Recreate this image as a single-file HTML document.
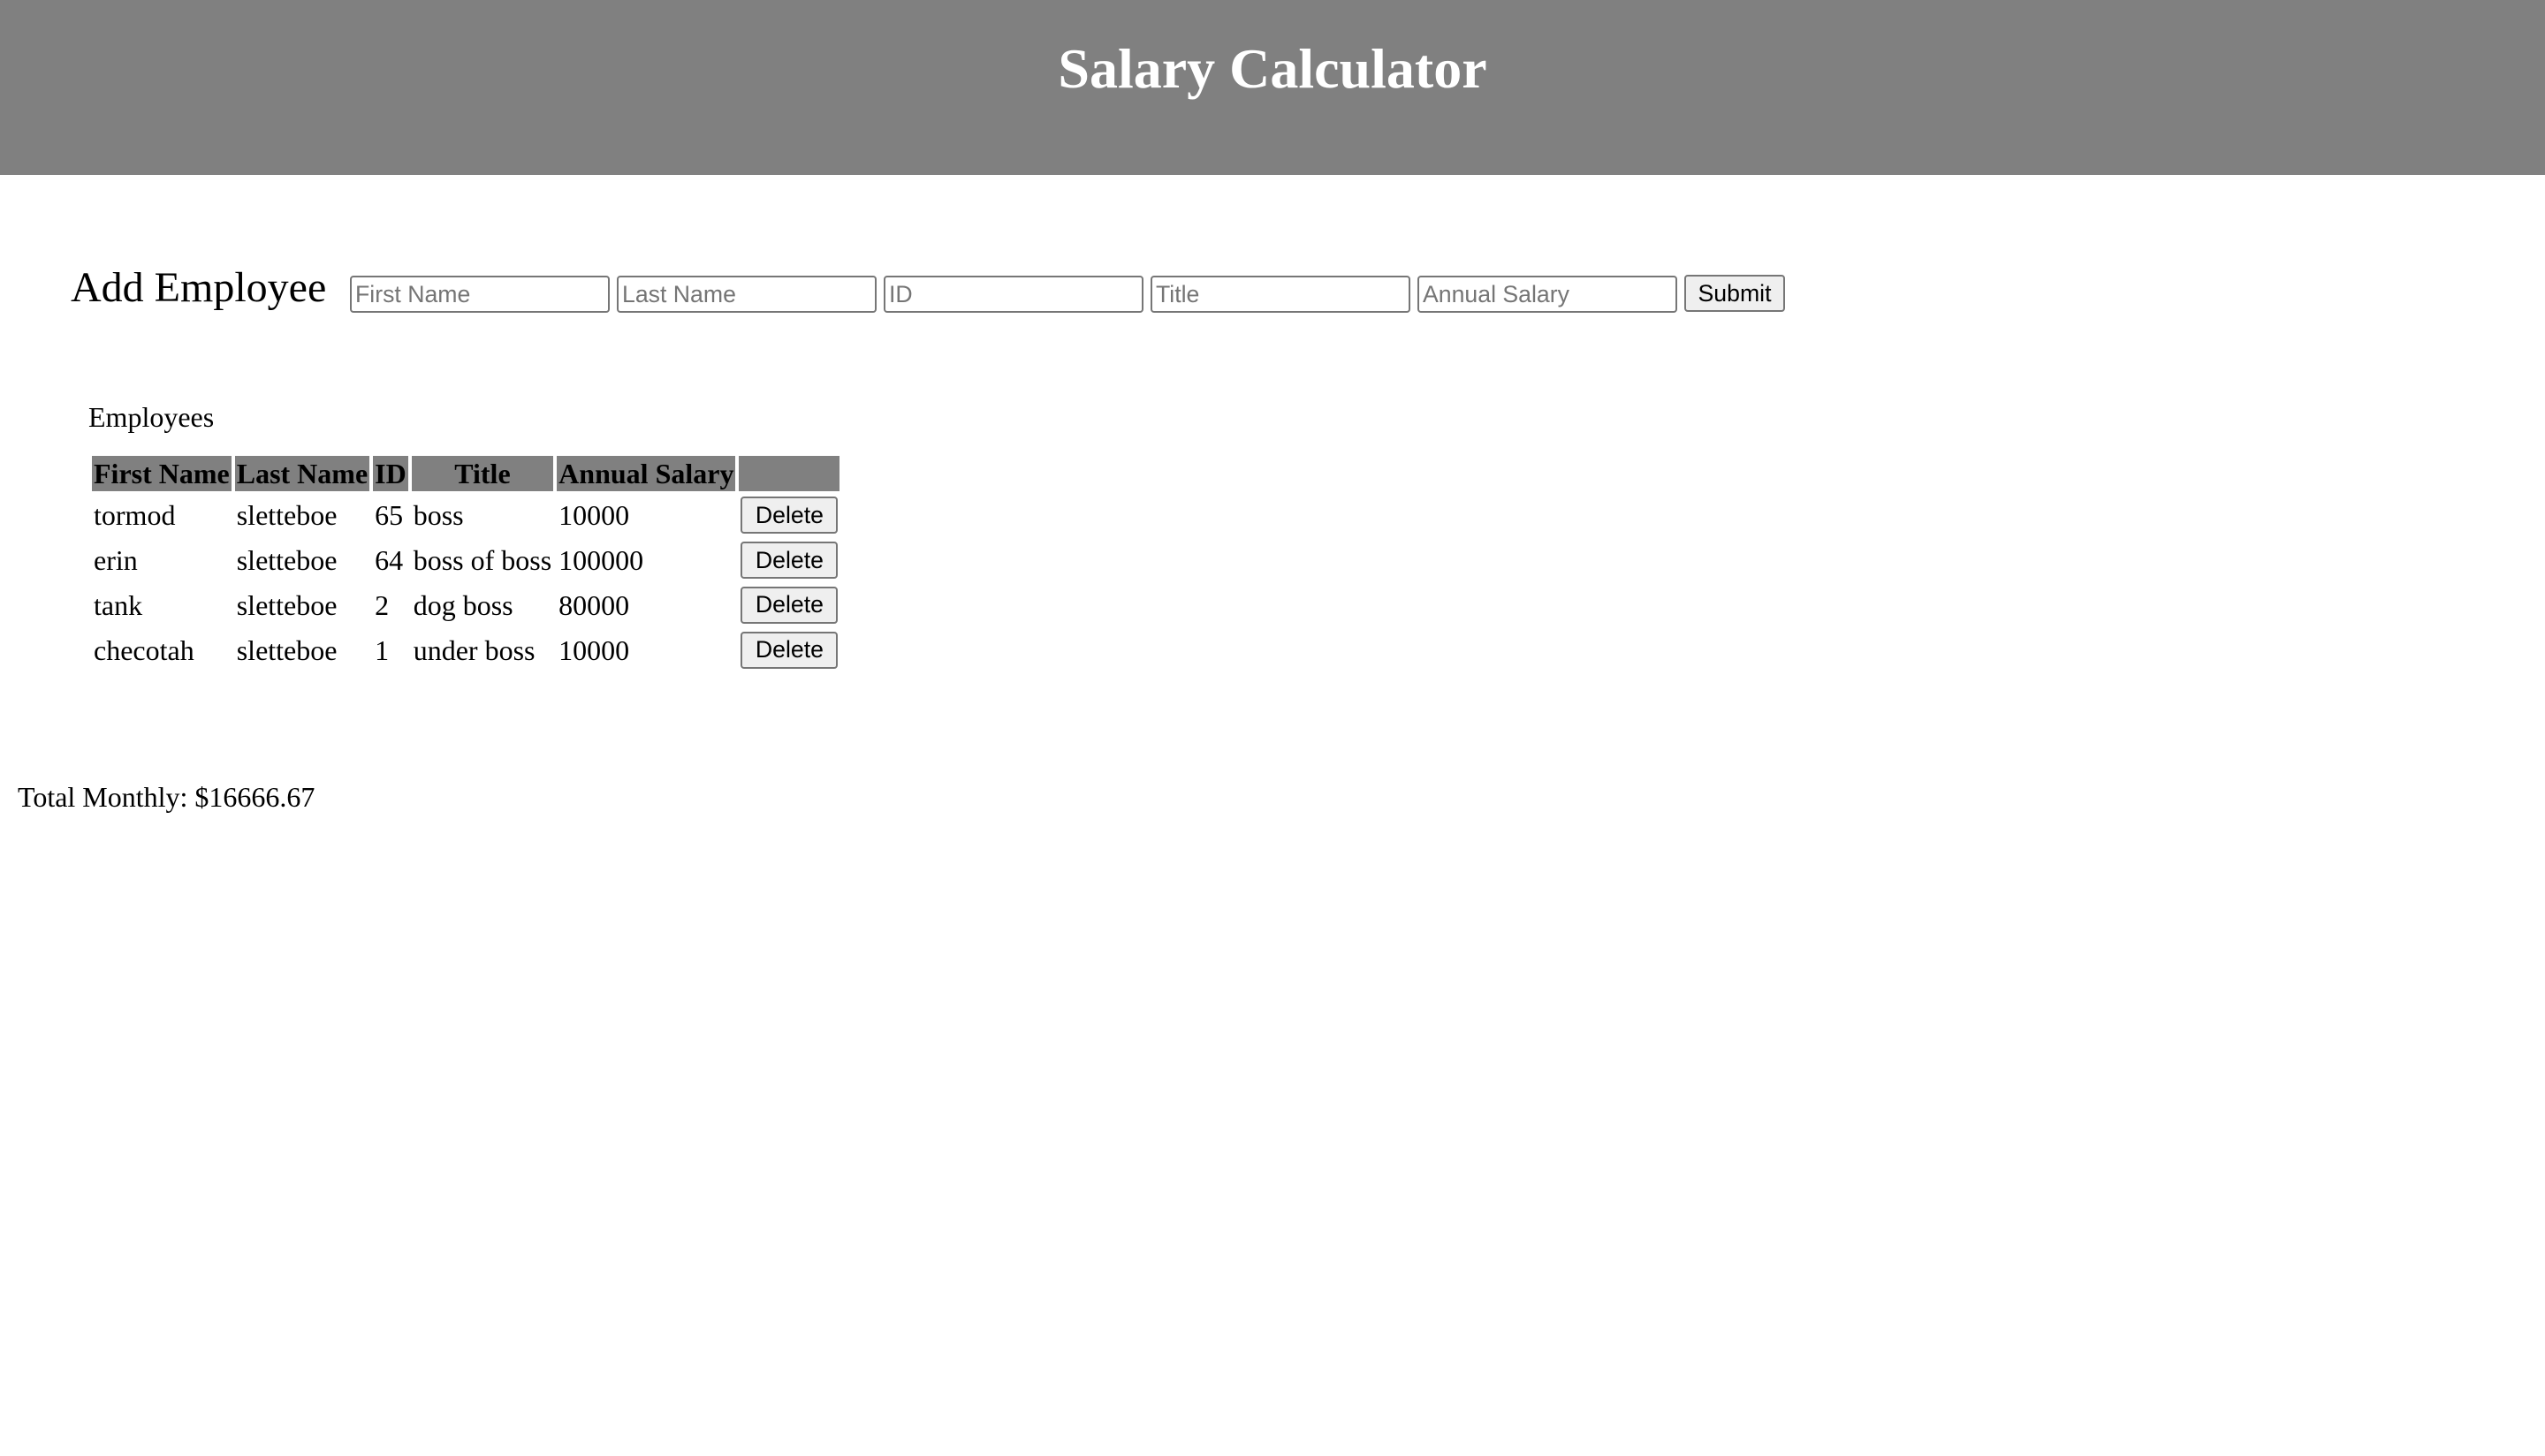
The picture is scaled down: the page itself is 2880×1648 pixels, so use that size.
<!DOCTYPE html>
<html><head><meta charset="utf-8"><style>
html{zoom:2}
body{margin:0;width:1440px;height:824px;position:relative;font-family:"Liberation Serif",serif;font-size:16px;color:#000;background:#fff;overflow:hidden}
.hdr{position:absolute;left:0;top:0;width:1440px;height:99px;background:#808080}
.hdr h1{margin:0;position:absolute;left:0;right:0;top:19px;text-align:center;color:#fff;font-size:32px;font-weight:bold;line-height:40px}
.ae{position:absolute;left:40px;top:148px;font-size:24px;line-height:30px}
input,button{position:absolute;box-sizing:border-box;font-family:"Liberation Sans",sans-serif;font-size:13.33px}
input{top:156px;width:147px;height:21px;border:1px solid #767676;border-radius:2px;padding:1px 2px;background:#fff}
input::placeholder{color:#757575}
button{border:1px solid #767676;border-radius:2px;background:#efefef;color:#000;padding:0;text-align:center}
.emp{position:absolute;left:50px;top:226px;line-height:20px}
table{position:absolute;left:50px;top:256px;border-spacing:2px;font-size:16px}
th{background:#808080;font-weight:bold;padding:1px;height:18px;line-height:18px;white-space:nowrap}
td{padding:0 1px;height:23.4px;line-height:18px;white-space:nowrap;position:relative}
td button{position:static;width:55px;height:21px;display:block}
.tot{position:absolute;left:10px;top:441px;line-height:20px}
</style></head><body>
<div class="hdr"><h1>Salary Calculator</h1></div>
<div class="ae">Add Employee</div>
<input style="left:198px" placeholder="First Name">
<input style="left:349px" placeholder="Last Name">
<input style="left:500px" placeholder="ID">
<input style="left:651px" placeholder="Title">
<input style="left:802px" placeholder="Annual Salary">
<button style="left:953px;top:155.5px;width:57px;height:21px">Submit</button>
<div class="emp">Employees</div>
<table>
<tr><th>First Name</th><th>Last Name</th><th>ID</th><th style="width:78px">Title</th><th>Annual Salary</th><th style="width:55px"></th></tr>
<tr><td>tormod</td><td>sletteboe</td><td>65</td><td>boss</td><td>10000</td><td><button>Delete</button></td></tr>
<tr><td>erin</td><td>sletteboe</td><td>64</td><td>boss of boss</td><td>100000</td><td><button>Delete</button></td></tr>
<tr><td>tank</td><td>sletteboe</td><td>2</td><td>dog boss</td><td>80000</td><td><button>Delete</button></td></tr>
<tr><td>checotah</td><td>sletteboe</td><td>1</td><td>under boss</td><td>10000</td><td><button>Delete</button></td></tr>
</table>
<div class="tot">Total Monthly: $16666.67</div>
</body></html>
